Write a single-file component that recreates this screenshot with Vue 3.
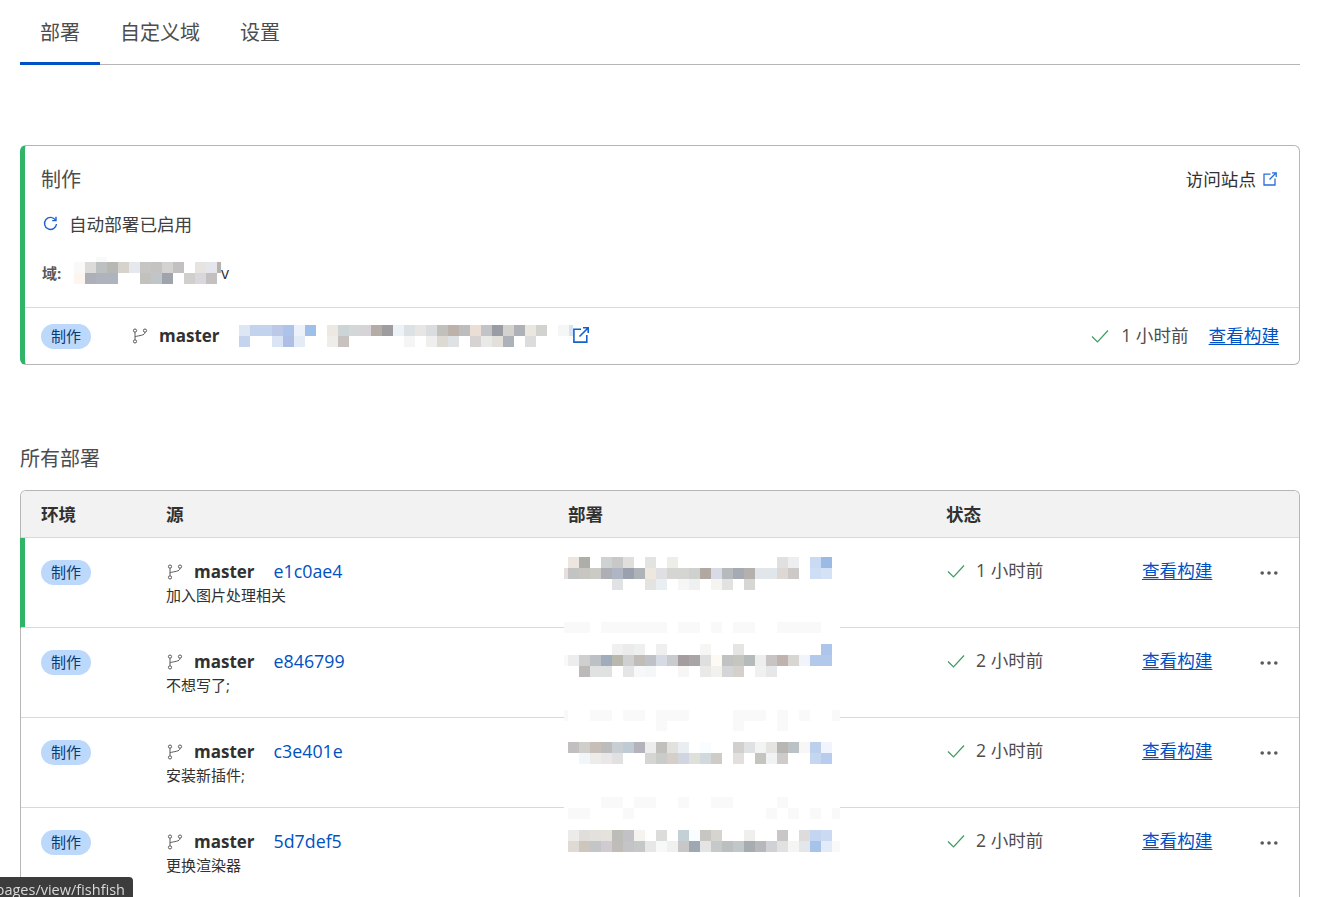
<script setup>
const W = '.'
const COLS = [564]
for (let i = 0; i < 25; i++) COLS.push(568 + 11 * i)
COLS.length = 26
COLS[25] = 832

function sparse(h, map) {
  return { h, cells: COLS.map((x) => (map[x] ? '#' + map[x] : '')) }
}
function faint(h, ranges) {
  return {
    h,
    cells: COLS.map((x) => (ranges.some(([a, b]) => x >= a && x < b) ? '#f9f9f9' : '')),
  }
}
function blockOf(lines) {
  return {
    cols: '4px repeat(24, 11px) 8px',
    rows: lines.map((l) => l.h + 'px').join(' '),
    cells: lines.flatMap((l) => l.cells),
  }
}
function flat(cols, heights, text) {
  return {
    cols,
    rows: heights.map((h) => h + 'px').join(' '),
    cells: text.trim().split(/\s+/).map((t) => (t === W ? '' : '#' + t)),
  }
}

const domainMosaic = flat('repeat(13, 11px) 4px', [5, 11, 11], `
  . . f9f9f9 . . . . . . . . . . .
  fbf9f8 dcdbda bcc0c1 b7b7b4 d8d2cc e5e9ed c6c5c3 c4c3c1 d3d2d0 c2c1bf . e6e3e0 e4e6ec b5b3b0
  fdf6ef adb0b8 afb3bb aeb4bd . . c2c1bd c0c5c9 9fa4ac . d0cfcc d8d8dc c4c0bf .
`)

const commitMosaic = flat('repeat(30, 11px) 4px', [11, 11], `
  dfe6f3 c3d3ee c3d3ee bcc8e8 acc4e9 edf2fa 9ebfe8 . eee8e2 ccd4d5 d3d7d7 d6d4d6 b3aca7 9e9c9f ebf2f8 dce1e4 e7e6e4 d9dde0 c1c0bb bcb2ab bdbdbd eaded5 c2c3c7 9a9ca3 d3d2cf aeb2b7 eae7df d2d2cf . f5f7f7 d8e4f5
  c4d4ee . . d9e5f5 aebee4 e3ebf6 . . efedea c7c2bf . . . . . f4f6f6 . efefee dcdad3 dee2e5 . d6d3d2 e9e9e8 e3e0dc acb2b7 . dcdcdc . . . .
`)

const rows = [
  {
    hash: 'e1c0ae4', msg: '加入图片处理相关', time: '1 小时前', top: 19, live: true,
    blur: blockOf([
      sparse(11, { 568: 'ede6e0', 579: 'adadaa', 601: 'ced2d2', 612: 'c9c8c9', 623: 'e1dfdc', 645: 'e3e3e1', 667: 'eeeee9', 777: 'e0e0e0', 788: 'edeef0', 810: 'c9daf3', 821: '9cbae6' }),
      sparse(11, { 564: 'e8dfdd', 568: 'c1c4c3', 579: 'c7c6c1', 590: 'cbcac5', 601: 'aeafb5', 612: 'afb5c3', 623: '9aa0ae', 634: 'aeb3b7', 645: 'eee7dd', 656: 'e0dfe3', 667: 'd5d6d1', 678: 'd5d5d3', 689: 'cfd1cf', 700: 'b1a9a1', 711: 'd8dbe5', 722: 'b6babd', 733: 'a6abb3', 744: 'b3b0ad', 755: 'e2e6ea', 766: 'e1e6ea', 777: 'ddd8d4', 788: 'cdc9c9', 810: 'cedef4', 821: 'd5e2f5' }),
      sparse(11, { 612: 'e1e2e3', 645: 'e3e3e2', 656: 'e8eef2', 678: 'f6f6f6', 689: 'eff0f0', 711: 'f5f4f0', 722: 'e2e2e0', 744: 'd6d6d5' }),
    ]),
  },
  {
    hash: 'e846799', msg: '不想写了;', time: '2 小时前', top: -6,
    blur: blockOf([
      faint(11, [[564, 590], [601, 667], [678, 700], [711, 722], [733, 755], [777, 821]]),
      sparse(11, {}),
      sparse(11, { 612: 'f0f0ef', 623: 'ebebeb', 634: 'eef0f0', 656: 'efefef', 700: 'f6f6f5', 733: 'e5e5e4', 821: 'adc5eb' }),
      sparse(11, { 564: 'f9f9f9', 568: 'ededed', 579: 'cfcfcf', 590: 'bcc1c5', 601: 'a0acbc', 612: 'b9b8ae', 623: 'cfd0d2', 634: 'c1bcb8', 645: 'bfc1c8', 656: 'd5dae4', 667: 'cacbce', 678: 'a59c9f', 689: 'a9a5a5', 700: 'dedfde', 711: 'fdf9f3', 722: 'c1c3c2', 733: 'c6c6c1', 744: 'b5baba', 755: 'eeeeee', 766: 'c9c4c4', 777: 'beb3af', 788: 'd7d6d3', 799: 'f1f5fb', 810: 'b2c9eb', 821: 'b2c9eb' }),
      sparse(11, { 579: 'bdb9b9', 590: 'e0e2e1', 601: 'e0e2e1', 623: 'e5e5e5', 634: 'f7f8fa', 645: 'f5f6f8', 678: 'f7f6f4', 700: 'ebe9e8', 711: 'f1f1ee', 722: 'd3d5d7', 733: 'd4d1cd', 755: 'f0f0f0', 766: 'e6e7e9' }),
    ]),
  },
  {
    hash: 'c3e401e', msg: '安装新插件;', time: '2 小时前', top: -8,
    blur: blockOf([
      faint(11, [[564, 568], [590, 612], [623, 645], [656, 689], [733, 766], [777, 788], [799, 810], [832, 840]]),
      faint(10, [[656, 667], [733, 744], [777, 788]]),
      sparse(11, {}),
      sparse(11, { 568: 'c2bfbf', 579: 'cfcecb', 590: 'c8beb8', 601: 'bcbcbc', 612: 'c9ced2', 623: 'c0cad5', 634: 'b4b2ba', 645: 'ededed', 656: 'c2c0bd', 667: 'e1e1de', 678: 'e9eef2', 700: 'f9fdff', 733: 'd2d0ce', 744: 'dfe1e3', 755: 'f2f4f3', 766: 'e5e4e3', 777: 'b7b6b2', 788: 'bbc2c6', 799: 'f8f6f7', 810: 'bcd0ee', 821: 'f1f4fd' }),
      sparse(11, { 579: 'f1f6fa', 590: 'eeece9', 601: 'e9e7e8', 612: 'e1e1e1', 645: 'd5d5d3', 656: 'c9ccc8', 667: 'd6cec9', 678: 'd0d5e0', 689: 'e0e0db', 700: 'd1d9dc', 711: 'cfcbc7', 733: 'e2dfde', 755: 'c6c4bf', 766: 'f0f2f4', 777: 'cfcbca', 810: 'c5d6f1', 821: 'b8cdee' }),
    ]),
  },
  {
    hash: '5d7def5', msg: '更换渲染器', time: '2 小时前', top: -11,
    blur: blockOf([
      faint(11, [[601, 623], [634, 656], [678, 689], [711, 733], [777, 788]]),
      faint(11, [[568, 590], [623, 634], [766, 777], [788, 799], [810, 821], [832, 840]]),
      sparse(11, {}),
      sparse(11, { 568: 'edebe9', 579: 'dfdedb', 590: 'e2e1de', 601: 'e5e2de', 612: 'bcbdb9', 623: 'c2c2c6', 634: 'f4f3f0', 656: 'dcdcda', 678: 'c3d0d6', 689: 'f9fdff', 700: 'c8c6c2', 711: 'd6d4ce', 744: 'f0efed', 777: 'c8c6c6', 799: 'dcdcdc', 810: 'c3d5f1', 821: 'cbd9f3' }),
      sparse(11, { 568: 'e0dad4', 579: 'cdc6bd', 590: 'c4c5c6', 601: 'cfcbd0', 612: 'c0bcb9', 623: 'c4c4c6', 634: 'c6c7c9', 645: 'e7e7e7', 656: 'f7f8f8', 667: 'f0f0f0', 678: 'c7c7c8', 689: '9fa7b1', 700: 'e4e4e4', 711: 'c5c9c9', 722: 'bbbfbf', 733: 'c1c6c7', 744: 'a6acb0', 755: 'b7b8bc', 766: 'd0d1d5', 777: 'e1e1e1', 788: 'f5f5f4', 799: 'e3e7ea', 810: 'a6c3ea', 821: 'e3ebf9', 832: 'f9f9fb' }),
    ]),
  },
]
</script>

<template>
  <div class="page">
    <nav class="tabs">
      <a class="tab active">部署</a>
      <a class="tab">自定义域</a>
      <a class="tab">设置</a>
    </nav>

    <section class="card">
      <div class="card-body">
        <div class="card-head">
          <h2 class="card-title">制作</h2>
          <span class="visit">访问站点
            <svg class="ext-sm" viewBox="0 0 14 14" fill="none" stroke="#2a6fd6" stroke-width="1.3">
              <path d="M7.5 2.1H1v10.9h11V6.5" />
              <path d="M6.5 7.5 13 1M9 .8h4.2V5" />
            </svg>
          </span>
        </div>
        <div class="auto">
          <svg class="refresh" viewBox="0 0 15 15" fill="none" stroke="#1d63c9" stroke-width="1.4">
            <path d="M12.6 4.2A6 6 0 1 0 13.5 8" />
            <path d="M13 .8v3.8H9.2" />
          </svg>
          <span>自动部署已启用</span>
        </div>
        <div class="domain">
          <strong class="domain-label">域:</strong>
          <div class="mosaic" :style="{ gridTemplateColumns: domainMosaic.cols, gridTemplateRows: domainMosaic.rows }">
            <i v-for="(c, i) in domainMosaic.cells" :key="i" :style="{ background: c }"></i>
          </div>
          <span class="domain-end">v</span>
        </div>
      </div>
      <div class="card-foot">
        <span class="badge">制作</span>
        <svg class="branch foot-branch" viewBox="0 0 16 16" fill="none" stroke="#595959" stroke-width="1">
          <circle cx="3" cy="2.6" r="1.6" /><circle cx="3" cy="13.4" r="1.6" /><circle cx="13" cy="2.6" r="1.6" />
          <path d="M3 4.2v7.6M13 4.2c0 3.6-6 3-10 4.6" />
        </svg>
        <b class="master">master</b>
        <div class="mosaic commit" :style="{ gridTemplateColumns: commitMosaic.cols, gridTemplateRows: commitMosaic.rows }">
          <i v-for="(c, i) in commitMosaic.cells" :key="i" :style="{ background: c }"></i>
        </div>
        <svg class="ext-lg" viewBox="0 0 16 16" fill="none" stroke="#1561d0" stroke-width="1.6">
          <path d="M8 2.2H.9v12.9h12.9V8" />
          <path d="M6.5 9.5 15 1M10 .8h5.2V6" />
        </svg>
        <span class="spacer"></span>
        <svg class="check" viewBox="0 0 18 14" fill="none" stroke="#3f9a62" stroke-width="1.2">
          <path d="M1 7.5 6.5 13 17 1.5" />
        </svg>
        <span class="time">1 小时前</span>
        <a class="link foot-link">查看构建</a>
      </div>
    </section>

    <h2 class="section-title">所有部署</h2>

    <section class="table">
      <div class="grid head">
        <div>环境</div>
        <div>源</div>
        <div>部署</div>
        <div>状态</div>
      </div>
      <div v-for="row in rows" :key="row.hash" class="grid row" :class="{ live: row.live }">
        <div class="cell"><span class="badge">制作</span></div>
        <div class="cell source">
          <div class="source-top">
            <svg class="branch" viewBox="0 0 16 16" fill="none" stroke="#595959" stroke-width="1">
              <circle cx="3" cy="2.6" r="1.6" /><circle cx="3" cy="13.4" r="1.6" /><circle cx="13" cy="2.6" r="1.6" />
              <path d="M3 4.2v7.6M13 4.2c0 3.6-6 3-10 4.6" />
            </svg>
            <b class="master">master</b>
            <a class="hash">{{ row.hash }}</a>
          </div>
          <div class="msg">{{ row.msg }}</div>
        </div>
        <div class="cell deploy">
          <div
            class="mosaic blur"
            :style="{ top: row.top + 'px', gridTemplateColumns: row.blur.cols, gridTemplateRows: row.blur.rows }"
          >
            <i v-for="(c, i) in row.blur.cells" :key="i" :style="{ background: c }"></i>
          </div>
        </div>
        <div class="cell status">
          <svg class="check" viewBox="0 0 18 14" fill="none" stroke="#3f9a62" stroke-width="1.2">
            <path d="M1 7.5 6.5 13 17 1.5" />
          </svg>
          <span class="time">{{ row.time }}</span>
        </div>
        <div class="cell"><a class="link">查看构建</a></div>
        <div class="cell">
          <svg class="dots" viewBox="0 0 18 4" fill="#595959">
            <circle cx="2.2" cy="2" r="1.8" /><circle cx="9" cy="2" r="1.8" /><circle cx="15.8" cy="2" r="1.8" />
          </svg>
        </div>
      </div>
    </section>

    <div class="status-tip"><span>pages/view/fishfish</span></div>
  </div>
</template>

<style>
html, body { overflow: hidden; background: #fff; }
</style>

<style scoped>
.page {
  width: 1280px;
  margin-left: 20px;
  color: #313131;
  font-family: "Open Sans", "Noto Sans CJK SC", sans-serif;
  font-size: 17.6px;
}
.tabs {
  display: flex;
  height: 65px;
  box-sizing: border-box;
  border-bottom: 1px solid #b6b6b6;
}
.tab {
  height: 65px;
  box-sizing: border-box;
  padding: 0 20px;
  font-size: 20px;
  line-height: 66px;
  color: #4d4d4d;
}
.tab.active { border-bottom: 3px solid #0051c3; }
.card {
  margin-top: 80px;
  height: 220px;
  box-sizing: border-box;
  display: flex;
  flex-direction: column;
  border: 1px solid #b6b6b6;
  border-left: 5px solid #2fb468;
  border-radius: 6px;
}
.card-body {
  height: 162px;
  box-sizing: border-box;
  padding: 20px 22px 0 16px;
  border-bottom: 1px solid #d9d9d9;
}
.card-head {
  display: flex;
  justify-content: space-between;
  align-items: center;
  height: 28px;
}
.card-title {
  margin: 0;
  font-size: 20px;
  font-weight: 400;
  line-height: 28px;
  color: #4d4d4d;
}
.visit {
  display: flex;
  align-items: center;
  gap: 7px;
  height: 28px;
  margin-top: -4px;
}
.ext-sm { width: 14px; height: 14px; margin-top: 1px; }
.auto {
  display: flex;
  align-items: center;
  height: 28px;
  margin-top: 15px;
  color: #404040;
}
.refresh { width: 15px; height: 15px; margin: 1px 11px 0 2px; }
.domain {
  display: flex;
  align-items: flex-start;
  margin-top: 20px;
  position: relative;
}
.domain-label {
  width: 33px;
  font-size: 15px;
  line-height: 20px;
  margin-top: 6px;
  margin-left: 1px;
  margin-right: -1px;
  font-weight: 700;
  color: #595959;
}
.domain-end {
  font-size: 16px;
  line-height: 20px;
  margin-top: 6px;
  color: #313131;
}
.mosaic { display: grid; }
.card-foot {
  flex: 1;
  display: flex;
  align-items: center;
  padding: 0 20px 0 16px;
}
.badge {
  display: inline-block;
  width: 50px;
  height: 25px;
  border-radius: 13px;
  background: #bcd9fb;
  color: #0a3a72;
  font-size: 15px;
  line-height: 25px;
  text-align: center;
}
.branch { width: 16px; height: 16px; flex: none; }
.foot-branch { margin-left: 41px; }
.master {
  font-weight: 700;
  font-size: 17px;
  margin-left: 11px;
  color: #313131;
  position: relative;
  top: -1px;
}
.commit { margin-left: 19px; }
.ext-lg { width: 16px; height: 16px; margin-bottom: 2px; }
.spacer { flex: 1; }
.check { width: 18px; height: 14px; flex: none; margin-right: 1px; }
.time { margin-left: 11px; color: #4d4d4d; position: relative; top: -2px; }
.link {
  color: #0051c3;
  text-decoration: underline;
  text-underline-offset: 2px;
  position: relative;
  top: -2px;
}
.foot-link { margin-left: 20px; }
.section-title {
  margin: 80px 0 17px;
  font-size: 20px;
  font-weight: 400;
  line-height: 28px;
  color: #4d4d4d;
}
.table {
  border: 1px solid #b6b6b6;
  border-bottom: 0;
  border-radius: 6px 6px 0 0;
}
.grid {
  display: grid;
  grid-template-columns: 145px 402px 378px 196px 118px 1fr;
}
.head {
  height: 47px;
  box-sizing: border-box;
  align-items: center;
  background: #f2f2f2;
  border-bottom: 1px solid #d9d9d9;
  border-radius: 5px 5px 0 0;
  font-weight: 700;
  padding-bottom: 2px;
}
.head > div:first-child { padding-left: 20px; }
.row {
  height: 90px;
  box-sizing: border-box;
  border-bottom: 1px solid #d9d9d9;
}
.row.live { box-shadow: -1px 0 0 #2fb468, inset 4px 0 0 #2fb468; }
.cell { padding-top: 21px; }
.cell:first-child { padding-left: 20px; }
.source { padding-top: 21px; }
.source-top { display: flex; align-items: center; height: 25px; padding-left: 1px; }
.source-top .master { top: 0; }
.hash { margin-left: 19px; font-size: 17.8px; color: #0051c3; position: relative; top: -1px; }
.msg { font-size: 15px; line-height: 22px; margin-top: 0; color: #313131; }
.deploy { position: relative; }
.blur {
  position: absolute;
  left: -4px;
  background: #fff;
}
.status { display: flex; align-items: flex-start; padding-top: 22px; }
.status .check { margin-top: 4px; margin-left: 1px; margin-right: 0; }
.status .time { margin-left: 11px; line-height: 24px; margin-top: -2px; top: 0; }
.row .link { line-height: 24px; display: inline-block; margin-top: 0; top: -1px; }
.dots { width: 18px; height: 4px; display: block; margin-top: 12px; }
.status-tip {
  position: fixed;
  left: 0;
  bottom: 0;
  width: 133px;
  height: 20px;
  box-sizing: border-box;
  padding-right: 8px;
  overflow: hidden;
  background: #3c3c3c;
  border-radius: 0 4px 0 0;
  color: #d8d8d8;
  font-size: 14.5px;
  line-height: 26px;
  white-space: nowrap;
  display: flex;
  justify-content: flex-end;
}
.status-tip span { flex: none; }
</style>
